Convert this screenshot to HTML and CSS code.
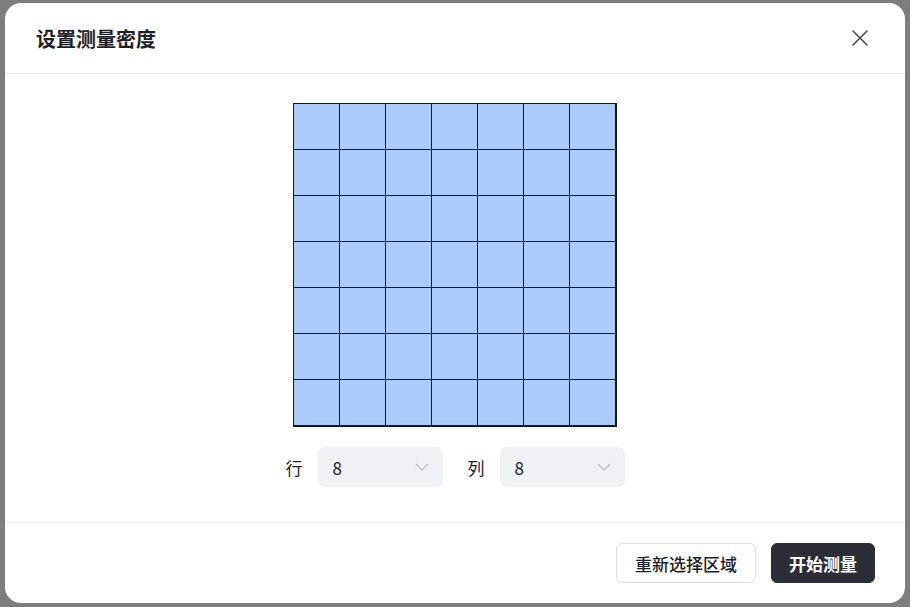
FILE: index.html
```html
<!DOCTYPE html>
<html lang="zh-CN">
<head>
    <meta charset="UTF-8">
    <title>设置测量密度</title>
    <link rel="stylesheet" href="styles.css">
</head>
<body>
    <div class="modal">
        <div class="modal-header">
            <h2>设置测量密度</h2>
            <button class="close" aria-label="关闭">
                <svg width="16" height="16" viewBox="0 0 16 16"><path d="M1 1L15 15M15 1L1 15" stroke="#4b4d55" stroke-width="1.6" stroke-linecap="round"/></svg>
            </button>
        </div>
        <div class="modal-body">
            <div class="grid" id="grid"></div>
            <div class="controls">
                <label>行</label>
                <div class="select"><span>8</span><svg width="14" height="8" viewBox="0 0 14 8"><path d="M1 1L7 7L13 1" fill="none" stroke="#b8bac2" stroke-width="1.2"/></svg></div>
                <label>列</label>
                <div class="select"><span>8</span><svg width="14" height="8" viewBox="0 0 14 8"><path d="M1 1L7 7L13 1" fill="none" stroke="#b8bac2" stroke-width="1.2"/></svg></div>
            </div>
        </div>
        <div class="modal-footer">
            <button class="btn">重新选择区域</button>
            <button class="btn primary">开始测量</button>
        </div>
    </div>
    <script>
        const grid = document.getElementById('grid');
        for (let i = 0; i < 49; i++) {
            const cell = document.createElement('div');
            cell.className = 'cell';
            grid.appendChild(cell);
        }
    </script>
</body>
</html>
```

FILE: styles.css
```css
body {
    margin: 0;
    height: 607px;
    background-color: #7d7d7d;
    font-family: "Noto Sans CJK SC", "Noto Sans", sans-serif;
    color: #1f2129;
    overflow: hidden;
}
.modal {
    margin: 3px 5px;
    width: 900px;
    height: 600px;
    background: #fff;
    border-radius: 16px;
    display: flex;
    flex-direction: column;
}
.modal-header {
    height: 70px;
    padding: 0 31px;
    display: flex;
    align-items: center;
    justify-content: space-between;
    border-bottom: 1px solid #ebecef;
}
.modal-header h2 {
    margin: 0;
    font-size: 20px;
    font-weight: 700;
    color: #1f2129;
}
.close {
    border: none;
    background: none;
    padding: 0;
    width: 16px;
    height: 16px;
    margin-right: 6px;
    cursor: pointer;
}
.modal-body {
    flex: 1;
    display: flex;
    flex-direction: column;
    align-items: center;
    padding-top: 29px;
    border-bottom: 1px solid #ebecef;
}
.grid {
    display: grid;
    grid-template-columns: repeat(7, 45px);
    grid-template-rows: repeat(7, 45px);
    gap: 1px;
    background: #15171c;
    border: 1px solid #15171c;
    border-right-width: 2px;
    border-bottom-width: 2px;
}
.cell {
    background: #abcbfa;
}
.controls {
    margin-top: 20px;
    display: flex;
    align-items: center;
    font-size: 17px;
}
.controls label {
    margin-right: 15px;
    color: #1f2129;
}
.select {
    width: 125px;
    height: 40px;
    box-sizing: border-box;
    padding: 0 14px 0 15px;
    background: #f0f1f5;
    border-radius: 6px;
    display: flex;
    align-items: center;
    justify-content: space-between;
    margin-right: 25px;
}
.select:last-child {
    margin-right: 0;
}
.modal-footer {
    height: 80px;
    padding: 0 30px;
    display: flex;
    align-items: center;
    justify-content: flex-end;
    gap: 15px;
}
.btn {
    height: 40px;
    padding: 0 18px;
    font-family: inherit;
    font-size: 17px;
    font-weight: 500;
    border: 1px solid #dcdde2;
    border-radius: 6px;
    background: #fff;
    color: #1f2129;
    cursor: pointer;
}
.btn.primary {
    padding: 0 17px;
    background: #2b2e36;
    border-color: #2b2e36;
    color: #fff;
    font-weight: 700;
}
```
